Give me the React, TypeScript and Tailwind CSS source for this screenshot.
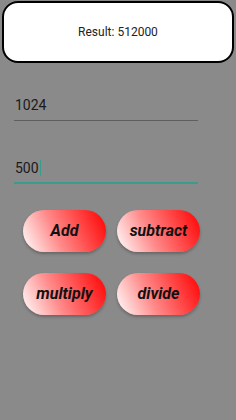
import React from "react";

const btn =
  "w-[83px] h-[42px] rounded-full flex items-center justify-center text-[16px] font-bold italic text-[#111] bg-[linear-gradient(65deg,#ffffff_0%,#ff8a8a_40%,#ff0000_100%)] shadow-[0_2px_3px_rgba(0,0,0,0.25)]";

export default function App() {
  return (
    <div className="w-[236px] h-[420px] bg-[#8a8a8a] font-['Roboto',sans-serif] overflow-hidden pt-px">
      <div className="mx-[2px] h-[62px] border-2 border-black rounded-[16px] bg-white flex items-center justify-center text-[12px] text-[#222]">
        Result: 512000
      </div>
      <div className="ml-[14px] w-[184px] mt-[34px] pb-[7px] border-b border-[#5f5f5f] text-[14px] leading-[16px] text-[#1a1a1a] pl-px">
        1024
      </div>
      <div className="ml-[14px] w-[184px] mt-[39px] pb-[6px] border-b-2 border-[#3a9c8c] text-[14px] leading-[16px] text-[#1a1a1a] pl-px flex items-center">
        <span>500</span>
        <span className="inline-block w-[1.5px] h-[16px] bg-[#3a9c8c] ml-px"></span>
      </div>
      <div className="ml-[23px] mt-[26px] grid grid-cols-[83px_83px] gap-x-[11px] gap-y-[21px]">
        <div className={btn}>Add</div>
        <div className={btn}>subtract</div>
        <div className={btn}>multiply</div>
        <div className={btn}>divide</div>
      </div>
    </div>
  );
}
